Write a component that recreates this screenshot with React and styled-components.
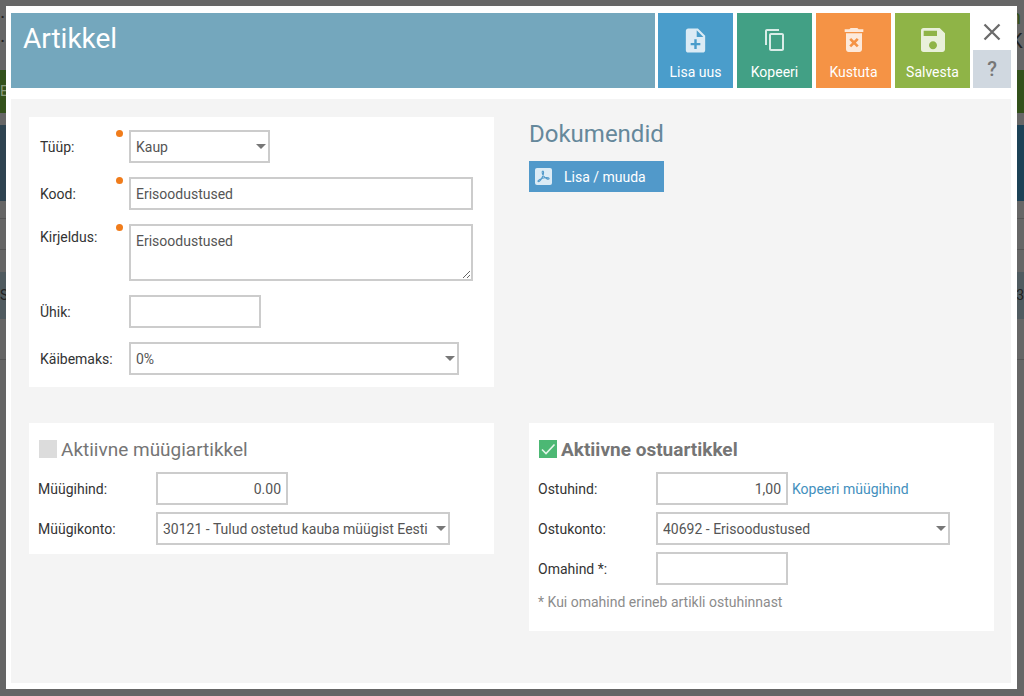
import React, { useState } from "react";
import styled, { createGlobalStyle } from "styled-components";
import {
  MdNoteAdd,
  MdContentCopy,
  MdDeleteForever,
  MdSave,
} from "react-icons/md";

const actions = [
  { label: "Lisa uus", color: "#4a9dcb", icon: MdNoteAdd, size: 29 },
  { label: "Kopeeri", color: "#42a085", icon: MdContentCopy, size: 24 },
  { label: "Kustuta", color: "#f59345", icon: MdDeleteForever, size: 32 },
  { label: "Salvesta", color: "#8fb447", icon: MdSave, size: 32 },
];

export default function App() {
  const [unit, setUnit] = useState("");
  const [ownPrice, setOwnPrice] = useState("");
  const [salesActive, setSalesActive] = useState(false);
  const [purchaseActive, setPurchaseActive] = useState(true);

  return (
    <>
      <GlobalStyle />
      <Page aria-hidden="true">
        <PageTop>
          <span>·</span>
          <span className="green">n</span>
          <span>·</span>
          <span>K</span>
        </PageTop>
        <PageNav>E</PageNav>
        <PageBanner />
        <PageLine />
        <PageLine />
        <PageHead>
          <span>S</span>
          <span>3</span>
        </PageHead>
        <PageLine />
      </Page>

      <Overlay>
        <Modal role="dialog" aria-labelledby="title">
          <Header>
            <Title id="title">Artikkel</Title>
            <Actions>
              {actions.map(({ label, color, icon: Icon, size }) => (
                <ActionButton key={label} type="button" $color={color}>
                  <span className="icon">
                    <Icon size={size} />
                  </span>
                  <span>{label}</span>
                </ActionButton>
              ))}
            </Actions>
            <Side>
              <CloseButton type="button" aria-label="Sulge">
                <svg width="18" height="18" viewBox="0 0 18 18">
                  <path
                    d="M1.5 1.5l15 15M16.5 1.5l-15 15"
                    stroke="#6b6b6b"
                    strokeWidth="2.3"
                  />
                </svg>
              </CloseButton>
              <HelpButton type="button">?</HelpButton>
            </Side>
          </Header>

          <Content>
            <Card>
              <MainForm>
                <Label htmlFor="type">Tüüp:</Label>
                <Required />
                <SelectBox $width="141px">
                  <select id="type">
                    <option>Kaup</option>
                  </select>
                </SelectBox>

                <Label htmlFor="code">Kood:</Label>
                <Required />
                <Input id="code" defaultValue="Erisoodustused" />

                <Label htmlFor="description" $top>
                  Kirjeldus:
                </Label>
                <Required />
                <TextArea id="description" defaultValue="Erisoodustused" />

                <Label htmlFor="unit">Ühik:</Label>
                <span />
                <Input
                  id="unit"
                  $width="132px"
                  value={unit}
                  onChange={(e) => setUnit(e.target.value)}
                />

                <Label htmlFor="vat">Käibemaks:</Label>
                <span />
                <SelectBox $width="330px">
                  <select id="vat">
                    <option>0%</option>
                  </select>
                </SelectBox>
              </MainForm>
            </Card>

            <Documents>
              <h2>Dokumendid</h2>
              <DocumentButton type="button">
                <svg width="17" height="17" viewBox="0 0 17 17">
                  <rect width="17" height="17" rx="2" fill="#dcebf5" />
                  <path
                    d="M7.6 3.2c1.5-.3 1 2.6.1 5C6.6 11 4.4 14.2 3.2 13.6c-1.3-1.1 3.4-3.5 6.7-3.9 2.7-.4 4.7.3 4.1 1.2-.8.9-3.6-.5-5.2-2.7C7.3 6.2 6.6 3.6 7.6 3.2z"
                    fill="none"
                    stroke="#5199ca"
                    strokeWidth="1.1"
                  />
                </svg>
                Lisa / muuda
              </DocumentButton>
            </Documents>

            <Card>
              <CardTitle>
                <Checkbox
                  checked={salesActive}
                  onChange={(e) => setSalesActive(e.target.checked)}
                />
                Aktiivne müügiartikkel
              </CardTitle>
              <PriceForm>
                <Label htmlFor="salesPrice">Müügihind:</Label>
                <Input
                  id="salesPrice"
                  $width="132px"
                  $right
                  defaultValue="0.00"
                />
                <Label htmlFor="salesAccount">Müügikonto:</Label>
                <SelectBox $width="294px">
                  <select id="salesAccount">
                    <option>30121 - Tulud ostetud kauba müügist Eesti</option>
                  </select>
                </SelectBox>
              </PriceForm>
            </Card>

            <Card>
              <CardTitle $bold>
                <Checkbox
                  checked={purchaseActive}
                  onChange={(e) => setPurchaseActive(e.target.checked)}
                />
                Aktiivne ostuartikkel
              </CardTitle>
              <PriceForm>
                <Label htmlFor="purchasePrice">Ostuhind:</Label>
                <PriceRow>
                  <Input
                    id="purchasePrice"
                    $width="132px"
                    $right
                    defaultValue="1,00"
                  />
                  <Link href="#">Kopeeri müügihind</Link>
                </PriceRow>
                <Label htmlFor="purchaseAccount">Ostukonto:</Label>
                <SelectBox $width="294px">
                  <select id="purchaseAccount">
                    <option>40692 - Erisoodustused</option>
                  </select>
                </SelectBox>
                <Label htmlFor="ownPrice">Omahind *:</Label>
                <Input
                  id="ownPrice"
                  $width="132px"
                  value={ownPrice}
                  onChange={(e) => setOwnPrice(e.target.value)}
                />
              </PriceForm>
              <Note>* Kui omahind erineb artikli ostuhinnast</Note>
            </Card>
          </Content>
        </Modal>
      </Overlay>
    </>
  );
}

function Checkbox({ checked, onChange }) {
  return (
    <CheckboxBox $checked={checked}>
      <input type="checkbox" checked={checked} onChange={onChange} />
      {checked && (
        <svg width="18" height="18" viewBox="0 0 18 18">
          <path
            d="M3 9.5l4 4L15.5 4.5"
            fill="none"
            stroke="#e4f5ea"
            strokeWidth="1.6"
          />
        </svg>
      )}
    </CheckboxBox>
  );
}

const GlobalStyle = createGlobalStyle`
  * {
    box-sizing: border-box;
  }

  body {
    margin: 0;
    background-color: #666666;
    font-family: Roboto, "Liberation Sans", sans-serif;
    font-size: 14px;
    color: #333333;
  }

  button,
  input,
  select,
  textarea {
    font: inherit;
  }

  button {
    border: none;
    padding: 0;
    cursor: pointer;
  }
`;

// dimmed page under the dialog
const Page = styled.div`
  height: 100vh;
  overflow: hidden;
  color: #222222;
`;

const PageTop = styled.div`
  display: grid;
  grid-template-columns: 1fr 14px;
  align-content: center;
  height: 70px;
  padding-bottom: 12px;
  font-size: 20px;
  line-height: 24px;

  .green {
    color: #35511c;
  }
`;

const PageNav = styled.div`
  height: 43px;
  margin-bottom: 12px;
  background-color: #33511b;
  color: #8a9a7c;
  font-size: 14px;
  line-height: 43px;
`;

const PageBanner = styled.div`
  height: 76px;
  background: linear-gradient(90deg, #2e4350, #1c4257);
`;

const PageLine = styled.div`
  height: 18px;
  border-bottom: 1px solid #555555;

  & + & {
    height: 31px;
    margin-bottom: 22px;
  }

  &:last-child {
    height: 41px;
  }
`;

const PageHead = styled.div`
  display: flex;
  justify-content: space-between;
  height: 47px;
  background-color: #505b60;
  font-size: 14px;
  line-height: 47px;
`;

const Overlay = styled.div`
  position: fixed;
  inset: 0;
  display: flex;
  padding: 6px 7px 7px 6px;
`;

const Modal = styled.div`
  flex: 1;
  display: flex;
  flex-direction: column;
  gap: 11px;
  padding: 7px 6px 6px 5px;
  overflow: auto;
  background-color: #ffffff;
`;

const Header = styled.div`
  display: flex;
  gap: 3px;
  height: 75px;
  flex-shrink: 0;
`;

const Title = styled.h1`
  flex: 1;
  margin: 0;
  padding: 10px 12px;
  background-color: #74a7bd;
  color: #ffffff;
  font-size: 28px;
  font-weight: 400;
  line-height: 32px;
`;

const Actions = styled.div`
  display: flex;
  gap: 4px;
`;

const ActionButton = styled.button`
  display: flex;
  flex-direction: column;
  align-items: center;
  width: 75px;
  padding-top: 11px;
  background-color: ${({ $color }) => $color};
  color: #ffffff;
  line-height: 32px;

  .icon {
    display: flex;
    align-items: center;
    height: 32px;
    color: rgba(255, 255, 255, 0.8);
  }
`;

const Side = styled.div`
  display: flex;
  flex-direction: column;
  width: 38px;
`;

const CloseButton = styled.button`
  display: flex;
  align-items: center;
  justify-content: center;
  height: 37px;
  background-color: #ffffff;
`;

const HelpButton = styled.button`
  height: 38px;
  background-color: #d0d8e0;
  color: #777777;
  font-size: 20px;
  font-weight: 500;
`;

const Content = styled.div`
  flex: 1;
  display: grid;
  grid-template-columns: 1fr 1fr;
  align-content: start;
  align-items: start;
  gap: 36px 35px;
  padding: 18px 17px 18px 18px;
  background-color: #f4f4f4;
`;

const Card = styled.section`
  padding: 13px 21px 9px 9px;
  background-color: #ffffff;
`;

const MainForm = styled.div`
  display: grid;
  grid-template-columns: 76px 13px 1fr;
  row-gap: 14px;
  padding: 0 0 3px 2px;
`;

const PriceForm = styled.div`
  display: grid;
  grid-template-columns: 118px 1fr;
  row-gap: 7px;
`;

const Label = styled.label`
  align-self: ${({ $top }) => ($top ? "start" : "center")};
  line-height: 26px;
  white-space: nowrap;
`;

const Required = styled.span`
  width: 7px;
  height: 7px;
  border-radius: 50%;
  background-color: #f07c1b;
`;

const Input = styled.input`
  width: ${({ $width }) => $width || "100%"};
  height: 33px;
  padding: 0 5px;
  border: 2px solid #cccccc;
  outline: none;
  background-color: #ffffff;
  color: #555555;
  text-align: ${({ $right }) => ($right ? "right" : "left")};
`;

const TextArea = styled.textarea`
  display: block;
  width: 100%;
  height: 57px;
  padding: 5px;
  border: 2px solid #cccccc;
  outline: none;
  color: #555555;
  line-height: 20px;
`;

const SelectBox = styled.div`
  position: relative;
  width: ${({ $width }) => $width};

  select {
    display: block;
    width: 100%;
    height: 33px;
    padding: 0 16px 0 5px;
    border: 2px solid #cccccc;
    border-radius: 0;
    outline: none;
    appearance: none;
    background-color: #ffffff;
    color: #555555;
  }

  &::after {
    content: "";
    position: absolute;
    top: 14px;
    right: 4px;
    border: 5px solid transparent;
    border-top-color: #777777;
    border-bottom: none;
    pointer-events: none;
  }
`;

const Documents = styled.section`
  padding-top: 1px;

  h2 {
    margin: 0 0 11px;
    color: #65889b;
    font-size: 24px;
    font-weight: 400;
    line-height: 32px;
  }
`;

const DocumentButton = styled.button`
  display: flex;
  align-items: center;
  gap: 12px;
  height: 31px;
  padding: 0 18px 0 6px;
  background-color: #5199ca;
  color: #ffffff;
`;

const CardTitle = styled.label`
  display: flex;
  align-items: center;
  gap: 4px;
  height: 26px;
  margin-bottom: 10px;
  padding-left: 1px;
  color: #757575;
  font-size: 19px;
  font-weight: ${({ $bold }) => ($bold ? 700 : 400)};
`;

const CheckboxBox = styled.span`
  display: grid;
  width: 18px;
  height: 18px;
  background-color: ${({ $checked }) => ($checked ? "#4cb874" : "#dcdcdc")};

  input,
  svg {
    grid-area: 1 / 1;
    width: 18px;
    height: 18px;
    margin: 0;
  }

  input {
    appearance: none;
    cursor: pointer;
  }

  svg {
    pointer-events: none;
  }
`;

const PriceRow = styled.div`
  display: flex;
  align-items: center;
  gap: 4px;
`;

const Link = styled.a`
  color: #4390bd;
  text-decoration: none;
`;

const Note = styled.p`
  margin: 7px 0 10px;
  color: #8c8c8c;
  line-height: 20px;
`;
